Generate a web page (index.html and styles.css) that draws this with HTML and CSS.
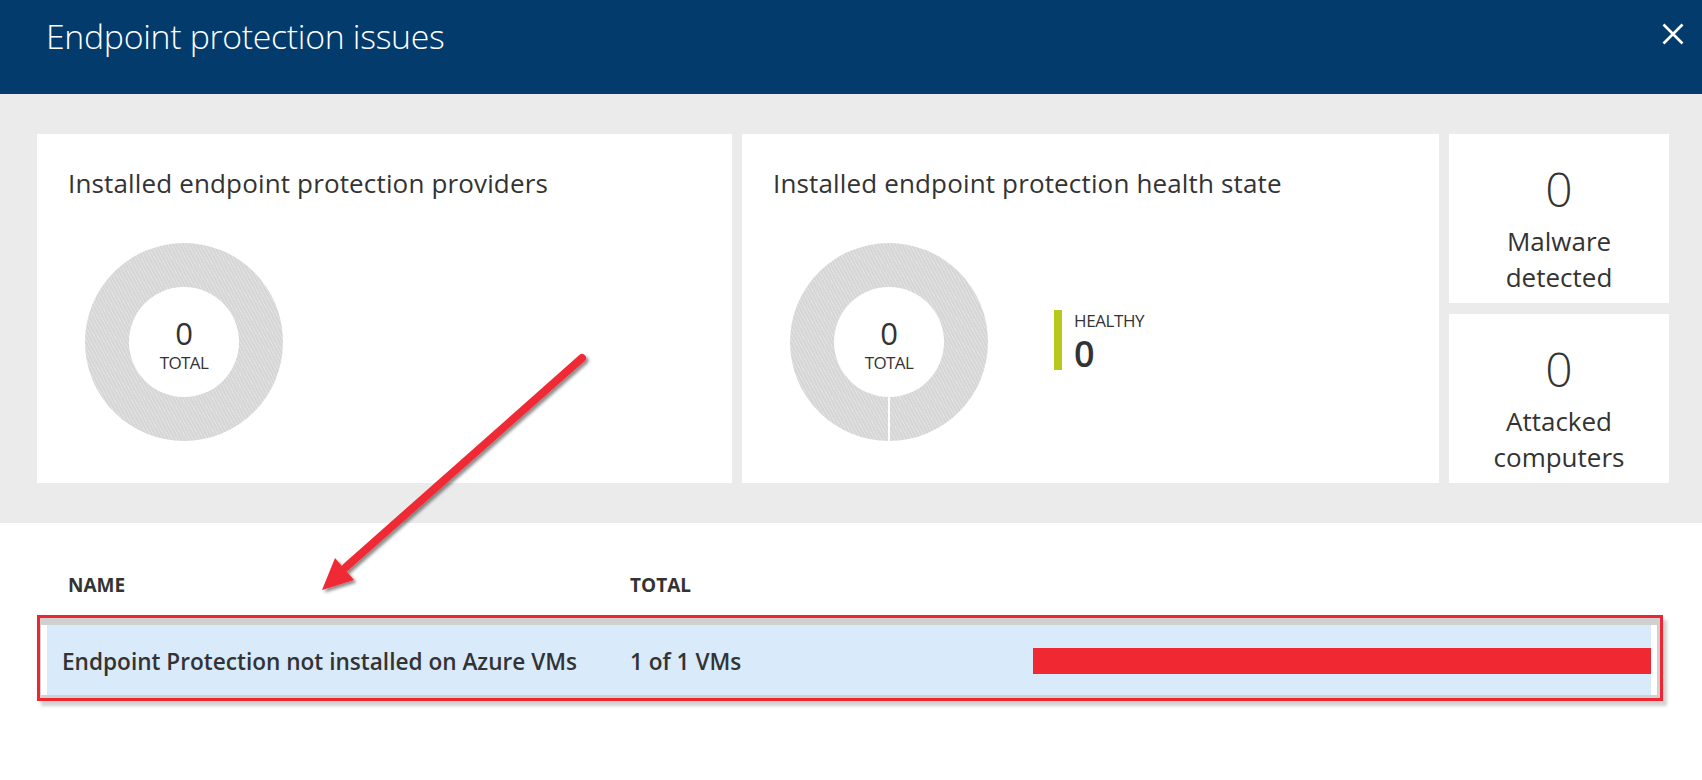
FILE: index.html
```html
<!DOCTYPE html>
<html lang="en">
<head>
<meta charset="utf-8">
<title>Endpoint protection issues</title>
<link rel="stylesheet" href="styles.css">
</head>
<body>
<div class="blade">
  <header class="blade-header">
    <h1 class="blade-title">Endpoint protection issues</h1>
    <button class="close-btn" aria-label="Close">
      <svg width="22" height="22" viewBox="0 0 22 22"><path d="M1.5 1.5 L20.5 20.5 M20.5 1.5 L1.5 20.5" stroke="#fff" stroke-width="2.6" fill="none"/></svg>
    </button>
  </header>

  <section class="summary">
    <div class="card">
      <h2 class="card-title">Installed endpoint protection providers</h2>
      <div class="chart-row">
        <div class="donut">
          <div class="donut-hole">
            <span class="donut-num">0</span>
            <span class="donut-label">TOTAL</span>
          </div>
        </div>
      </div>
    </div>

    <div class="card">
      <h2 class="card-title">Installed endpoint protection health state</h2>
      <div class="chart-row">
        <div class="donut donut-split">
          <div class="donut-hole">
            <span class="donut-num">0</span>
            <span class="donut-label">TOTAL</span>
          </div>
        </div>
        <div class="legend">
          <span class="legend-bar"></span>
          <div class="legend-text">
            <span class="legend-label">HEALTHY</span>
            <span class="legend-value">0</span>
          </div>
        </div>
      </div>
    </div>

    <div class="stat-col">
      <div class="stat-card">
        <div class="stat-num">0</div>
        <div class="stat-label">Malware<br>detected</div>
      </div>
      <div class="stat-card">
        <div class="stat-num">0</div>
        <div class="stat-label">Attacked<br>computers</div>
      </div>
    </div>
  </section>

  <section class="issues">
    <div class="issues-head">
      <span class="col-name">NAME</span>
      <span class="col-total">TOTAL</span>
    </div>
    <div class="highlight">
      <div class="issue-row">
        <span class="issue-name">Endpoint Protection not installed on Azure VMs</span>
        <span class="issue-total">1 of 1 VMs</span>
        <span class="issue-bar"><span class="issue-bar-fill" style="width:100%"></span></span>
      </div>
    </div>
  </section>
</div>

<svg class="annotation" width="1702" height="780" viewBox="0 0 1702 780">
  <defs>
    <filter id="shadow" x="-10%" y="-10%" width="130%" height="130%">
      <feDropShadow dx="2.5" dy="2.5" stdDeviation="1.5" flood-color="#000" flood-opacity="0.45"/>
    </filter>
  </defs>
  <g filter="url(#shadow)">
    <line x1="582" y1="358" x2="346" y2="567" stroke="#f02a35" stroke-width="8" stroke-linecap="round"/>
    <polygon points="322,590 335,558 354,580" fill="#f02a35"/>
  </g>
</svg>
</body>
</html>
```

FILE: styles.css
```css
* { box-sizing: border-box; }

html, body {
  margin: 0;
  padding: 0;
  background: #ffffff;
}

body {
  width: 1702px;
  height: 780px;
  overflow: hidden;
  font-family: "Open Sans", "Noto Sans", sans-serif;
  color: #333333;
  position: relative;
}

.blade-header {
  height: 94px;
  background: #033b6d;
  display: flex;
  justify-content: space-between;
  align-items: flex-start;
  padding: 15px 18px 0 46px;
}

.blade-title {
  margin: 0;
  font-size: 33.8px;
  line-height: 42px;
  font-weight: 300;
  color: #ffffff;
  letter-spacing: -0.3px;
}

.close-btn {
  margin-top: 8px;
  padding: 0;
  border: 0;
  background: transparent;
  width: 22px;
  height: 22px;
  display: block;
}

.close-btn svg { display: block; }

.summary {
  background: #ebebeb;
  padding: 40px 0 40px 37px;
  display: grid;
  grid-template-columns: 695px 697px 220px;
  column-gap: 10px;
  height: 429px;
}

.card {
  background: #ffffff;
  height: 349px;
  padding: 33px 0 0 31px;
}

.card-title {
  margin: 0;
  font-size: 26px;
  line-height: 32px;
  font-weight: 400;
  letter-spacing: 0.15px;
  color: #333333;
}

.chart-row {
  margin-top: 44px;
  padding-left: 17px;
  display: flex;
  align-items: center;
}

.donut {
  width: 198px;
  height: 198px;
  border-radius: 50%;
  background:
    repeating-linear-gradient(62deg, rgba(255,255,255,0.28) 0 1px, rgba(255,255,255,0) 1px 3px),
    #d6d6d6;
  display: flex;
  align-items: center;
  justify-content: center;
  flex-shrink: 0;
}

.donut-split {
  background:
    repeating-linear-gradient(62deg, rgba(255,255,255,0.28) 0 1px, rgba(255,255,255,0) 1px 3px),
    conic-gradient(#d6d6d6 0deg 179.3deg, #ffffff 179.3deg 180.7deg, #d6d6d6 180.7deg 360deg);
}

.donut-hole {
  width: 110px;
  height: 110px;
  border-radius: 50%;
  background: #ffffff;
  display: flex;
  flex-direction: column;
  align-items: center;
  justify-content: center;
  padding-top: 6px;
}

.donut-num {
  font-size: 31px;
  line-height: 34px;
  color: #333333;
}

.donut-label {
  font-size: 17px;
  line-height: 22px;
  margin-top: 2px;
  color: #333333;
  letter-spacing: -0.6px;
}

.legend {
  margin-left: 66px;
  display: flex;
  align-items: stretch;
}

.legend-bar {
  width: 8px;
  height: 60px;
  background: #b6c91c;
}

.legend-text {
  margin-left: 12px;
  display: flex;
  flex-direction: column;
}

.legend-label {
  font-size: 17px;
  line-height: 20px;
  color: #333333;
  letter-spacing: -0.4px;
  margin-top: 1px;
}

.legend-value {
  font-size: 36px;
  line-height: 40px;
  margin-top: 3px;
  font-weight: 600;
  color: #333333;
}

.stat-col {
  display: flex;
  flex-direction: column;
  gap: 11px;
  height: 349px;
}

.stat-card {
  background: #ffffff;
  height: 169px;
  text-align: center;
  padding-top: 27px;
}

.stat-num {
  font-size: 48px;
  line-height: 56px;
  font-weight: 300;
  color: #333333;
}

.stat-label {
  margin-top: 6px;
  font-size: 26px;
  line-height: 36px;
  color: #333333;
}

.issues {
  padding: 50px 39px 0 37px;
}

.issues-head {
  display: grid;
  grid-template-columns: 562px 1fr;
  padding-left: 31px;
  font-size: 19px;
  line-height: 24px;
  font-weight: 700;
  color: #333333;
}

.highlight {
  margin-top: 18px;
  border: 3px solid #ee2631;
  background: #d0d0d0;
  padding: 7px 3px 3px 1px;
  box-shadow: 4px 5px 3px rgba(0, 0, 0, 0.18);
}

.issue-row {
  height: 70px;
  background: #d9eafb;
  border-left: 6px solid #ffffff;
  border-right: 6px solid #ffffff;
  display: grid;
  grid-template-columns: 568px 403px 1fr;
  align-items: center;
  padding-left: 15px;
  padding-top: 4px;
}

.issue-name,
.issue-total {
  font-size: 22.6px;
  line-height: 30px;
  font-weight: 600;
  color: #333333;
}

.issue-bar {
  display: block;
  height: 26px;
  margin-top: -2px;
}

.issue-bar-fill {
  display: block;
  height: 26px;
  background: #f02832;
}

.annotation {
  position: absolute;
  left: 0;
  top: 0;
  pointer-events: none;
}
```
